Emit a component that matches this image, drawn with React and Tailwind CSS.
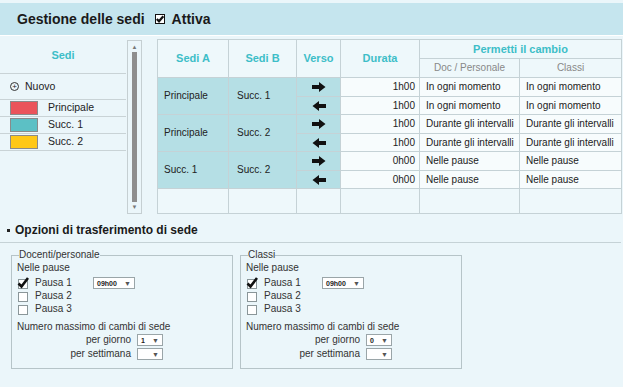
import React from 'react';

// Colori principali
const teal = 'text-[#3dbec8]';

const ArrowRight = () => (
  <svg width="14" height="10" viewBox="0 0 14 10">
    <path d="M0 3 H7 V0 L13.5 5 L7 10 V7 H0 Z" fill="#111" />
  </svg>
);

const ArrowLeft = () => (
  <svg width="14" height="10" viewBox="0 0 14 10">
    <path d="M14 3 H7 V0 L0.5 5 L7 10 V7 H14 Z" fill="#111" />
  </svg>
);

const Check = ({ checked }) => (
  <svg width="12" height="12" viewBox="0 0 12 12" className="shrink-0">
    <rect x="1.5" y="2.5" width="9" height="9" fill="#fff" stroke="#8a9699" />
    {checked && <path d="M1.5 6.5 L4.5 9.5 L11 1" fill="none" stroke="#111" strokeWidth="2.6" />}
  </svg>
);

const Select = ({ value, w = 'w-[26px]' }) => (
  <div className={`${w} h-[12px] bg-white border border-[#9aa5a8] flex items-center justify-between px-[3px] text-[7px] font-bold text-[#222] leading-none`}>
    <span>{value}</span>
    <span className="text-[7px] text-[#555]">▼</span>
  </div>
);

const rows = [
  { a: 'Principale', b: 'Succ. 1', d: ['1h00', '1h00'], doc: ['In ogni momento', 'In ogni momento'] },
  { a: 'Principale', b: 'Succ. 2', d: ['1h00', '1h00'], doc: ['Durante gli intervalli', 'Durante gli intervalli'] },
  { a: 'Succ. 1', b: 'Succ. 2', d: ['0h00', '0h00'], doc: ['Nelle pause', 'Nelle pause'] },
];

const sedi = [
  { name: 'Principale', color: 'bg-[#ea545b]' },
  { name: 'Succ. 1', color: 'bg-[#5cc0c5]' },
  { name: 'Succ. 2', color: 'bg-[#ffc817]' },
];

const Opzioni = ({ title, perGiorno }) => (
  <fieldset className="w-[222px] h-[120px] border border-[#b6c4c8] pl-[5px] pr-[4px]">
    <legend className="ml-[2px] text-[10px] text-[#333] leading-[12px]">{title}</legend>
    <div className="text-[10px] text-[#333] leading-[12px]">
      <div className="mt-[1px]">Nelle pause</div>
      <div className="mt-[3px] flex flex-col gap-[1px]">
        <div className="flex items-center h-[12px]">
          <Check checked />
          <span className="ml-[6px] w-[58px]">Pausa 1</span>
          <Select value="09h00" w="w-[42px]" />
        </div>
        <div className="flex items-center h-[12px]">
          <Check />
          <span className="ml-[6px]">Pausa 2</span>
        </div>
        <div className="flex items-center h-[12px]">
          <Check />
          <span className="ml-[6px]">Pausa 3</span>
        </div>
      </div>
      <div className="mt-[6px]">Numero massimo di cambi di sede</div>
      <div className="mt-[1px] flex flex-col items-end w-[146px] gap-[2px]">
        <div className="flex items-center gap-[6px]">
          <span>per giorno</span>
          <Select value={perGiorno} />
        </div>
        <div className="flex items-center gap-[6px]">
          <span>per settimana</span>
          <Select value="" />
        </div>
      </div>
    </div>
  </fieldset>
);

export default function App() {
  return (
    <div className="w-[623px] h-[387px] overflow-hidden bg-[#ebf6fa] font-['Liberation_Sans',Arial,sans-serif] text-[#222]">
      {/* Intestazione */}
      <div className="pt-[3px] border-b border-white">
        <div className="h-[32px] bg-[#c5e5ee] flex items-center pl-[17px]">
          <span className="text-[14px] font-bold text-[#1a1a1a]">Gestione delle sedi</span>
          <span className="ml-[10px]">
            <svg width="10" height="10" viewBox="0 0 10 10">
              <rect x="0.5" y="0.5" width="9" height="9" fill="#fff" stroke="#111" />
              <path d="M1.8 5 L4 7.3 L8.3 2.2" fill="none" stroke="#111" strokeWidth="2.2" />
            </svg>
          </span>
          <span className="ml-[7px] text-[14px] font-bold text-[#1a1a1a]">Attiva</span>
        </div>
      </div>

      {/* Sedi + tabella */}
      <div className="flex items-start pt-[2px]">
        <div className="w-[126px]">
          <div className={`h-[36px] border-b border-[#c9d3d6] flex items-center justify-center text-[11px] font-bold ${teal}`}>
            Sedi
          </div>
          <div className="h-[26px] border-b border-[#c9d3d6] flex items-center pl-[10px] text-[10.5px]">
            <span className="w-[9px] h-[9px] rounded-full border border-[#333] flex items-center justify-center text-[8px] leading-none mr-[6px]">+</span>
            Nuovo
          </div>
          {sedi.map((s) => (
            <div key={s.name} className="h-[17px] border-b border-[#c9d3d6] flex items-center pl-[10px] text-[10.5px]">
              <span className={`w-[28px] h-[14px] ${s.color} border border-[#8a8a8a] mr-[10px]`} />
              {s.name}
            </div>
          ))}
        </div>

        {/* Barra di scorrimento */}
        <div className="ml-[1px] mt-[2px] w-[15px] h-[174px] border border-[#c5cfd2] flex flex-col items-center">
          <span className="mt-[3px] text-[6px] leading-none text-[#777]">▲</span>
          <div className="mt-[2px] w-[5px] flex-1 bg-[#8e8e8e]" />
          <span className="mt-[2px] mb-[3px] text-[6px] leading-none text-[#777]">▼</span>
        </div>

        <table className="ml-[15px] mt-[1px] border-collapse table-fixed text-[10px] leading-none">
          <colgroup>
            <col className="w-[71px]" />
            <col className="w-[68px]" />
            <col className="w-[44px]" />
            <col className="w-[79px]" />
            <col className="w-[100px]" />
            <col className="w-[102px]" />
          </colgroup>
          <thead>
            <tr className="h-[19px] bg-[#eef8fb]">
              <th rowSpan={2} className={`border border-[#c5d2d6] text-[11px] font-bold ${teal}`}>Sedi A</th>
              <th rowSpan={2} className={`border border-[#c5d2d6] text-[11px] font-bold ${teal}`}>Sedi B</th>
              <th rowSpan={2} className={`border border-[#c5d2d6] text-[11px] font-bold ${teal}`}>Verso</th>
              <th rowSpan={2} className={`border border-[#c5d2d6] text-[11px] font-bold ${teal}`}>Durata</th>
              <th colSpan={2} className={`border border-[#c5d2d6] text-[11px] font-bold ${teal}`}>Permetti il cambio</th>
            </tr>
            <tr className="h-[19px] bg-[#eef8fb]">
              <th className="border border-[#c5d2d6] font-normal text-[#888]">Doc / Personale</th>
              <th className="border border-[#c5d2d6] font-normal text-[#888]">Classi</th>
            </tr>
          </thead>
          <tbody>
            {rows.map((r, i) =>
              [0, 1].map((k) => (
                <tr key={`${i}-${k}`} className={k === 0 ? 'h-[19px]' : 'h-[18px]'}>
                  {k === 0 && (
                    <>
                      <td rowSpan={2} className="border border-[#c5d2d6] bg-[#b5dfe5] pl-[6px]">{r.a}</td>
                      <td rowSpan={2} className="border border-[#c5d2d6] bg-[#b5dfe5] pl-[8px]">{r.b}</td>
                    </>
                  )}
                  <td className="border border-[#c5d2d6] bg-[#b5dfe5]">
                    <div className="flex justify-center">{k === 0 ? <ArrowRight /> : <ArrowLeft />}</div>
                  </td>
                  <td className="border border-[#c5d2d6] bg-[#f7fcfd] text-right pr-[4px]">{r.d[k]}</td>
                  <td className="border border-[#c5d2d6] bg-[#f7fcfd] pl-[6px] whitespace-nowrap">{r.doc[k]}</td>
                  <td className="border border-[#c5d2d6] bg-[#f7fcfd] pl-[6px] whitespace-nowrap">{r.doc[k]}</td>
                </tr>
              ))
            )}
            <tr className="h-[25px]">
              {[0, 1, 2, 3, 4, 5].map((c) => (
                <td key={c} className="border border-[#c5d2d6] bg-[#eef8fb]" />
              ))}
            </tr>
          </tbody>
        </table>
      </div>

      {/* Opzioni */}
      <div className="mt-[4px] h-[25px] w-[621px] border-b border-[#c5d2d6] flex items-center pl-[7px]">
        <span className="w-[3px] h-[3px] bg-[#222] mr-[5px]" />
        <span className="text-[12px] font-bold text-[#1a1a1a]">Opzioni di trasferimento di sede</span>
      </div>
      <div className="flex gap-[7px] pl-[11px] pt-[6px]">
        <Opzioni title="Docenti/personale" perGiorno="1" />
        <Opzioni title="Classi" perGiorno="0" />
      </div>
    </div>
  );
}
